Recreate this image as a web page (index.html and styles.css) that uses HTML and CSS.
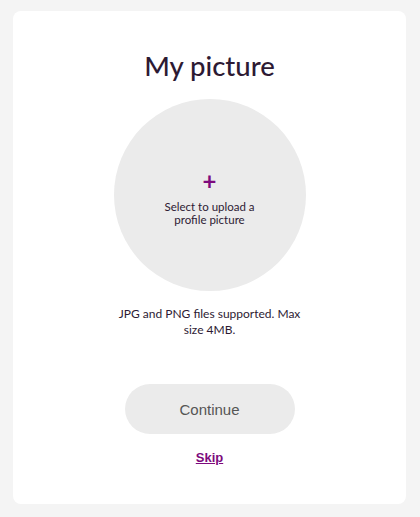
FILE: index.html
```html
<!DOCTYPE html>
<html lang="en">
<head>
  <meta charset="UTF-8">
  <title>My picture</title>
  <link rel="stylesheet" href="styles.css">
</head>
<body>
  <div class="card">
    <h1>My picture</h1>

    <label class="upload">
      <span class="plus">+</span>
      <span class="upload-text">Select to upload a<br>profile picture</span>
    </label>

    <p class="hint">JPG and PNG files supported. Max size 4MB.</p>

    <button class="continue">Continue</button>
    <a href="#" class="skip">Skip</a>
  </div>
</body>
</html>
```

FILE: styles.css
```css
body {
  margin: 0;
  background: #f4f4f4;
  font-family: Lato, "Noto Sans", sans-serif;
  padding: 11px 14px 13px 13px;
}
.card {
  background: white;
  border-radius: 8px;
  height: 493px;
  box-sizing: border-box;
  display: flex;
  flex-direction: column;
  align-items: center;
  padding-top: 35px;
}
h1 {
  margin: 0;
  font-size: 27.5px;
  font-weight: 500;
  color: #2d1a33;
  line-height: 40px;
}
.upload {
  margin-top: 13px;
  width: 192px;
  height: 192px;
  border-radius: 50%;
  background: #ebebeb;
  display: flex;
  flex-direction: column;
  align-items: center;
  justify-content: center;
  cursor: pointer;
}
.plus {
  color: #7d0a7d;
  font-size: 24px;
  font-weight: bold;
  line-height: 20px;
  margin-top: 6px;
}
.upload-text {
  margin-top: 9px;
  font-size: 11.5px;
  line-height: 13px;
  text-align: center;
  color: #2d1a33;
}
.hint {
  margin: 15px 0 0;
  width: 190px;
  font-size: 12px;
  line-height: 16px;
  text-align: center;
  color: #2d1a33;
}
.continue {
  margin-top: 46px;
  width: 170px;
  height: 50px;
  border: none;
  border-radius: 25px;
  background: #ebebeb;
  color: #555;
  font-family: "Liberation Sans", Arial, sans-serif;
  font-size: 15px;
  cursor: pointer;
}
.skip {
  margin-top: 16px;
  color: #7d0a7d;
  font-family: "Liberation Sans", Arial, sans-serif;
  font-weight: bold;
  font-size: 13px;
}
```
